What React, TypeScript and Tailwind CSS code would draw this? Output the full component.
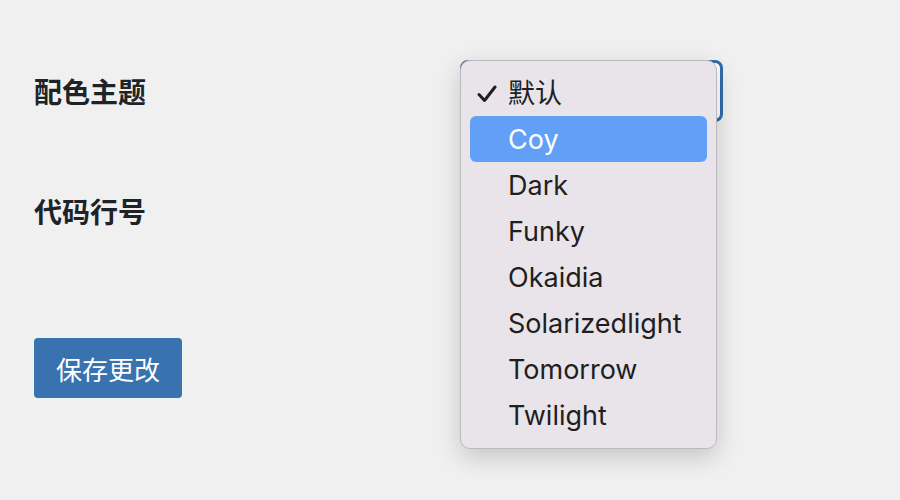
import React from 'react';

const themes = ['默认', 'Coy', 'Dark', 'Funky', 'Okaidia', 'Solarizedlight', 'Tomorrow', 'Twilight'];

export default function App() {
  const selected = 0;
  const hover = 1;

  return (
    <div
      className="relative w-[900px] h-[500px] overflow-hidden bg-[#f0f0f1] pl-[34px] pt-[60px]"
      style={{ fontFamily: 'Inter, "Noto Sans CJK SC", sans-serif' }}
    >
      {/* Settings rows */}
      <div className="flex items-center h-[62px]">
        <div className="w-[426px] text-[28px] font-bold text-[#1d2327]" style={{ fontFamily: '"Noto Sans CJK SC", sans-serif' }}>
          配色主题
        </div>
        <div className="w-[263px] h-[62px] rounded-lg border-[3px] border-[#2f6dab] bg-white" />
      </div>

      <div className="flex items-center h-[62px] mt-[58px]">
        <div className="w-[426px] text-[28px] font-bold text-[#1d2327]" style={{ fontFamily: '"Noto Sans CJK SC", sans-serif' }}>
          代码行号
        </div>
      </div>

      <button
        className="mt-[96px] h-[60px] px-[22px] rounded-[4px] bg-[#3873af] text-white text-[26px]"
        style={{ fontFamily: '"Noto Sans CJK SC", sans-serif' }}
      >
        保存更改
      </button>

      {/* Open select menu */}
      <div className="absolute left-[460px] top-[60px] w-[257px] h-[389px] rounded-[10px] border border-[#bdbabf] bg-[#e8e4ea] pt-[9px] shadow-[0_8px_24px_rgba(0,0,0,0.18)]">
        {themes.map((t, i) => (
          <div
            key={t}
            className={`relative mx-[9px] h-[46px] flex items-center pl-[38px] pt-[2px] rounded-[6px] text-[27px] ${
              i === hover ? 'bg-[#62a0f8] text-white' : 'text-[#1f1e21]'
            }`}
          >
            {i === selected && (
              <svg className="absolute left-[7px] top-[15px]" width="20" height="18" viewBox="0 0 20 18">
                <path d="M2 9.5 L7.5 15.5 L18 2" fill="none" stroke="#1f1e21" strokeWidth="3" strokeLinecap="round" strokeLinejoin="round" />
              </svg>
            )}
            {t}
          </div>
        ))}
      </div>
    </div>
  );
}
